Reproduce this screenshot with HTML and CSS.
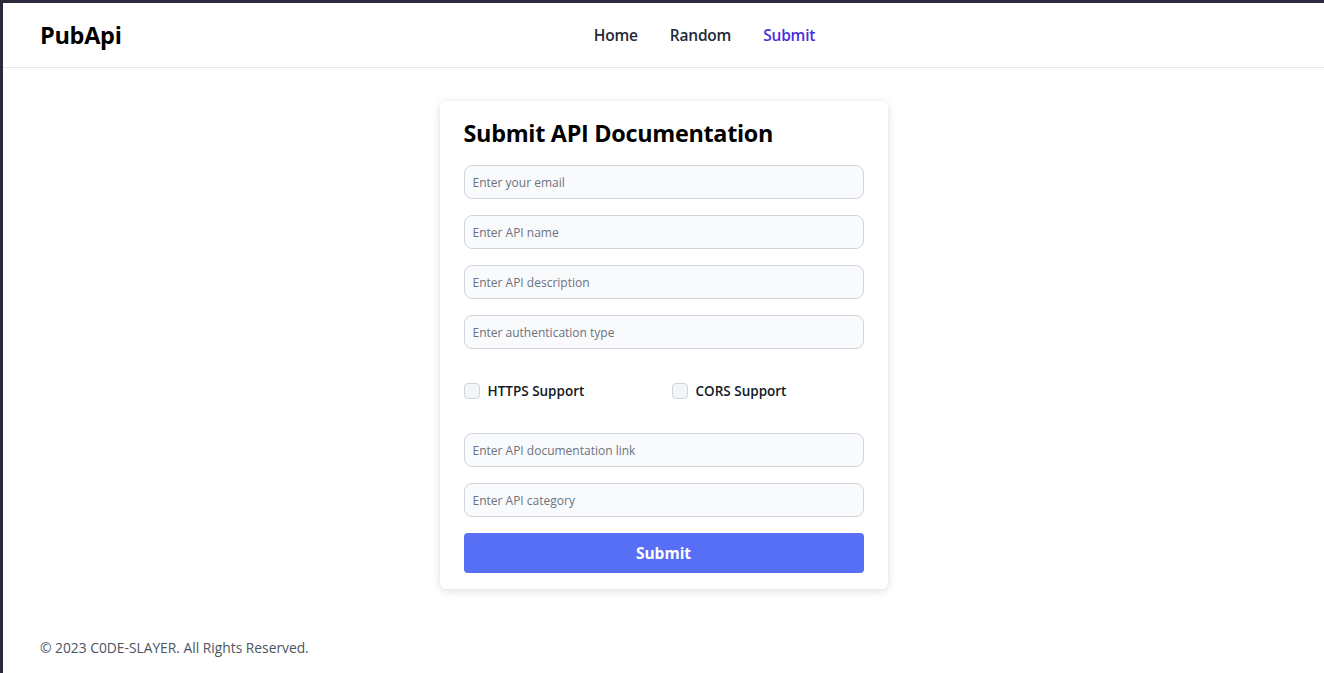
FILE: index.html
```html
<!DOCTYPE html>
<html lang="en">
<head>
<meta charset="utf-8">
<title>PubApi - Submit</title>
<link rel="stylesheet" href="styles.css">
</head>
<body>
<div class="frame">
  <header class="header">
    <div class="logo">PubApi</div>
    <nav class="nav">
      <a href="#" class="nav-link">Home</a>
      <a href="#" class="nav-link">Random</a>
      <a href="#" class="nav-link active">Submit</a>
    </nav>
    <div class="spacer"></div>
  </header>
  <main class="main">
    <form class="card">
      <h1 class="title">Submit API Documentation</h1>
      <div class="fields">
        <input class="input" type="email" placeholder="Enter your email">
        <input class="input" type="text" placeholder="Enter API name">
        <input class="input" type="text" placeholder="Enter API description">
        <input class="input" type="text" placeholder="Enter authentication type">
      </div>
      <div class="checks">
        <label class="check"><span class="box"></span>HTTPS Support</label>
        <label class="check"><span class="box"></span>CORS Support</label>
      </div>
      <div class="fields">
        <input class="input" type="text" placeholder="Enter API documentation link">
        <input class="input" type="text" placeholder="Enter API category">
        <button class="btn" type="button">Submit</button>
      </div>
    </form>
  </main>
  <footer class="footer">© 2023 C0DE-SLAYER. All Rights Reserved.</footer>
</div>
</body>
</html>
```
FILE: styles.css
```css
* { box-sizing: border-box; }
html, body { margin: 0; padding: 0; height: 100%; }
body {
  background: #2b2a3c;
  font-family: "Open Sans", "Noto Sans", sans-serif;
  color: #111;
}
.frame {
  margin: 3px 0 0 3px;
  height: calc(100% - 3px);
  background: #fff;
  display: flex;
  flex-direction: column;
}
.header {
  height: 65px;
  border-bottom: 1px solid #e5e7eb;
  display: flex;
  align-items: center;
  padding: 0 37px;
}
.logo {
  font-size: 23.5px;
  font-weight: 700;
  color: #000;
  width: 241px;
  letter-spacing: -0.3px;
}
.nav {
  flex: 1;
  display: flex;
  justify-content: center;
  gap: 32px;
}
.spacer { width: 159px; }
.nav-link {
  font-size: 15.5px;
  font-weight: 600;
  color: #1f2937;
  text-decoration: none;
  letter-spacing: -0.2px;
}
.nav-link.active { color: #4a2ee0; }
.main {
  display: flex;
  justify-content: center;
  padding-top: 33px;
  flex: 1;
}
.card {
  width: 448px;
  align-self: flex-start;
  background: #fff;
  border-radius: 6px;
  box-shadow: 0 2px 8px rgba(0,0,0,0.12), 0 0 2px rgba(0,0,0,0.05);
  padding: 16px 24px 16px;
  display: flex;
  flex-direction: column;
}
.title {
  margin: 0 0 16px;
  font-size: 23.4px;
  font-weight: 700;
  color: #000;
  line-height: 32px;
  letter-spacing: -0.3px;
}
.fields {
  display: flex;
  flex-direction: column;
  gap: 16px;
}
.input {
  width: 100%;
  height: 34px;
  border: 1px solid #d1d5db;
  border-radius: 8px;
  background: #f9fafb;
  padding: 0 8px;
  font-family: inherit;
  font-size: 12px;
  color: #374151;
}
.input::placeholder { color: #6b7280; }
.checks {
  display: grid;
  grid-template-columns: 1fr 1fr;
  gap: 16px;
  padding: 34px 0 34px;
}
.check {
  display: flex;
  align-items: center;
  gap: 8px;
  font-size: 13.5px;
  font-weight: 600;
  color: #111827;
  height: 16px;
}
.box {
  width: 16px;
  height: 16px;
  border: 1px solid #d1d5db;
  border-radius: 4px;
  background: #f3f4f6;
}
.btn {
  height: 40px;
  border: none;
  border-radius: 4px;
  background: #566ff5;
  color: #fff;
  font-family: inherit;
  font-size: 15.5px;
  font-weight: 700;
}
.footer {
  padding: 0 37px 16px;
  font-size: 13.8px;
  color: #4b5563;
}
```
